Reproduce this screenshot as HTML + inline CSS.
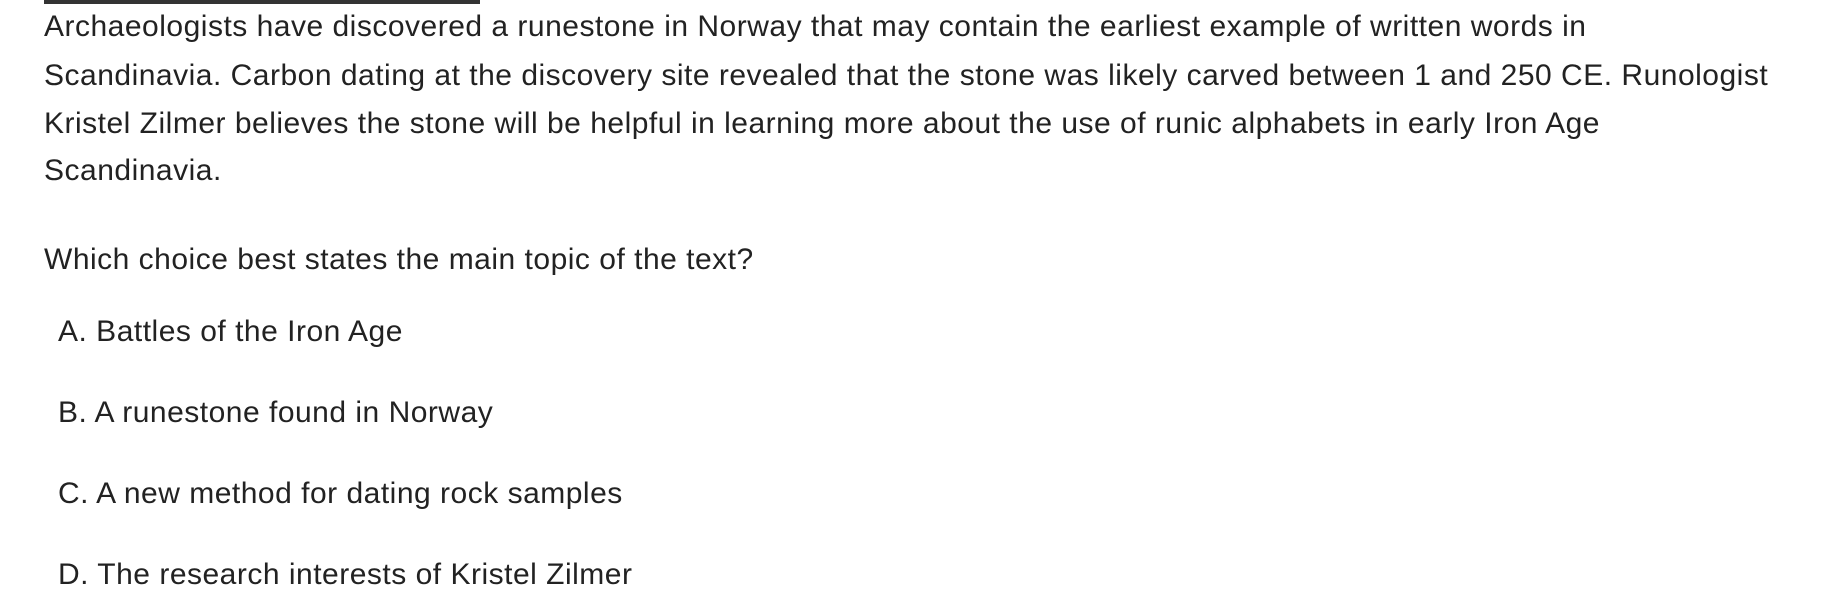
<!DOCTYPE html>
<html><head><style>
body{margin:0;width:1836px;height:616px;background:#fff;overflow:hidden;font-family:"Liberation Sans",sans-serif;color:#222;}
.bar{position:absolute;left:44px;top:0;width:436px;height:4px;background:#333;}
.l{position:absolute;white-space:nowrap;font-size:30px;line-height:32px;letter-spacing:0.5px;}
</style></head><body>
<div class="bar"></div>
<div class="l" style="left:44px;top:11px">Archaeologists have discovered a runestone in Norway that may contain the earliest example of written words in</div>
<div class="l" style="left:44px;top:60px">Scandinavia. Carbon dating at the discovery site revealed that the stone was likely carved between 1 and 250 CE. Runologist</div>
<div class="l" style="left:44px;top:108px">Kristel Zilmer believes the stone will be helpful in learning more about the use of runic alphabets in early Iron Age</div>
<div class="l" style="left:44px;top:155px">Scandinavia.</div>
<div class="l" style="left:44px;top:244px">Which choice best states the main topic of the text?</div>
<div class="l" style="left:58px;top:316px">A. Battles of the Iron Age</div>
<div class="l" style="left:58px;top:397px">B. A runestone found in Norway</div>
<div class="l" style="left:58px;top:478px">C. A new method for dating rock samples</div>
<div class="l" style="left:58px;top:559px">D. The research interests of Kristel Zilmer</div>
</body></html>
